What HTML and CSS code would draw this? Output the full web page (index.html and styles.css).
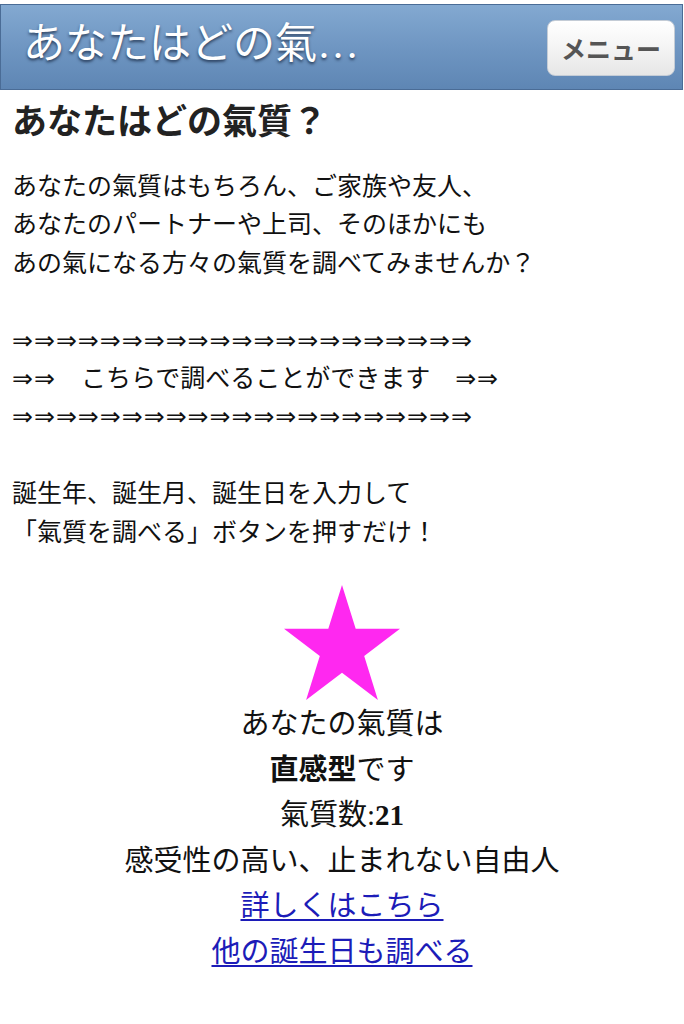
FILE: index.html
```html
<!DOCTYPE html>
<html lang="ja">
<head>
<meta charset="utf-8">
<title>あなたはどの氣質？</title>
<link rel="stylesheet" href="styles.css">
</head>
<body>
<header class="topbar">
  <div class="topbar-title">あなたはどの氣…</div>
  <div class="menu-btn">メニュー</div>
</header>
<main class="content">
  <h1 class="page-title">あなたはどの氣質？</h1>
  <p class="intro">
    あなたの氣質はもちろん、ご家族や友人、<br>
    あなたのパートナーや上司、そのほかにも<br>
    あの氣になる方々の氣質を調べてみませんか？<br>
    <br>
    <span class="arr">⇒⇒⇒⇒⇒⇒⇒⇒⇒⇒⇒⇒⇒⇒⇒⇒⇒⇒⇒⇒⇒</span><br>
    <span class="arr">⇒⇒</span>　こちらで調べることができます　<span class="arr">⇒⇒</span><br>
    <span class="arr">⇒⇒⇒⇒⇒⇒⇒⇒⇒⇒⇒⇒⇒⇒⇒⇒⇒⇒⇒⇒⇒</span><br>
    <br>
    誕生年、誕生月、誕生日を入力して<br>
    「氣質を調べる」ボタンを押すだけ！
  </p>
  <div class="result">
    <svg class="star" width="116" height="115" viewBox="0 0 116 110.4" preserveAspectRatio="none">
      <polygon fill="#ff28f0" points="58,0 71.7,42.1 116,42.1 80.2,68.2 93.9,110.4 58,84.3 22.1,110.4 35.8,68.2 0,42.1 44.3,42.1"/>
    </svg>
    <div class="result-line">あなたの氣質は</div>
    <div class="result-line"><b>直感型</b>です</div>
    <div class="result-line">氣質数:<b>21</b></div>
    <div class="result-line">感受性の高い、止まれない自由人</div>
    <div class="result-line"><a href="#">詳しくはこちら</a></div>
    <div class="result-line"><a href="#">他の誕生日も調べる</a></div>
  </div>
</main>
</body>
</html>
```

FILE: styles.css
```css
html, body {
  margin: 0;
  padding: 0;
  background: #ffffff;
}

body {
  font-family: "Noto Sans CJK JP", sans-serif;
  color: #111111;
}

.topbar {
  margin: 4px 1px 0 0;
  height: 84px;
  border: 1px solid #4a6c96;
  background: linear-gradient(to bottom, #83a9d1 0%, #6f96c2 50%, #5e86b4 100%);
  display: flex;
  align-items: center;
  justify-content: space-between;
  padding: 0 7px 0 22px;
  box-sizing: content-box;
}

.topbar-title {
  font-family: "Liberation Serif", "Noto Sans CJK JP", serif;
  font-size: 42px;
  line-height: 48px;
  color: #ffffff;
  text-shadow: 0 2px 3px rgba(20, 35, 60, 0.75);
  margin-top: -6px;
  white-space: nowrap;
}

.menu-btn {
  width: 126px;
  height: 54px;
  border: 1px solid #c4ccd6;
  border-radius: 8px;
  background: linear-gradient(to bottom, #ffffff 0%, #f4f4f4 50%, #e6e6e6 100%);
  display: flex;
  align-items: center;
  justify-content: center;
  font-family: "Noto Sans CJK JP", sans-serif;
  font-weight: 700;
  font-size: 25px;
  color: #555555;
  margin-top: 2px;
}

.content {
  padding: 0 12px;
}

.page-title {
  font-family: "Liberation Serif", "Noto Sans CJK JP", serif;
  font-weight: 700;
  font-size: 35px;
  line-height: 44px;
  margin: 11px 0 0;
  color: #222222;
}

.intro {
  margin: 20px 0 0;
  font-size: 25px;
  line-height: 38.4px;
  color: #111111;
}

.arr {
  font-family: "DejaVu Sans", sans-serif;
  font-size: 25px;
  line-height: 1;
  letter-spacing: 1px;
}

.result {
  margin-top: 36px;
  display: flex;
  flex-direction: column;
  align-items: center;
  font-family: "Liberation Serif", "Noto Sans CJK JP", serif;
  font-size: 29px;
  color: #111111;
}

.star {
  display: block;
  margin-bottom: 2px;
}

.result-line {
  line-height: 45.6px;
  white-space: nowrap;
}

.result-line b {
  font-weight: 700;
}

.result-line a {
  color: #1c1cb8;
  text-decoration: underline;
  text-underline-offset: 3px;
}
```
